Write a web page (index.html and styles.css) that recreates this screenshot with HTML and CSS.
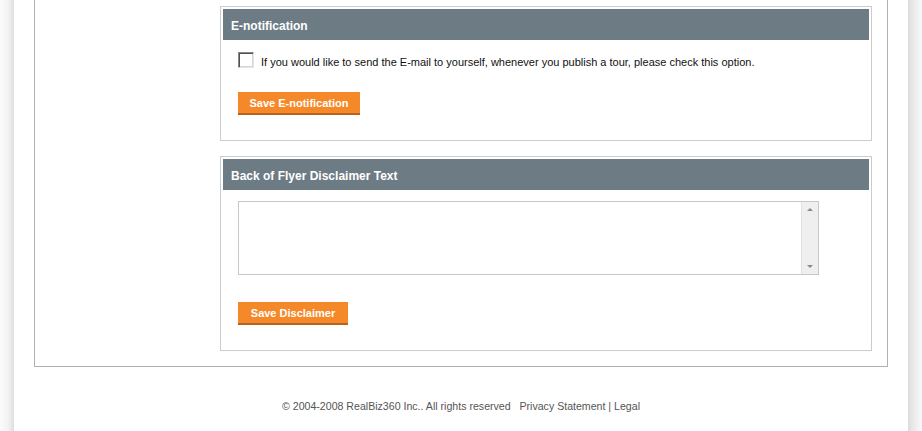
FILE: index.html
```html
<!DOCTYPE html>
<html>
<head>
<meta charset="utf-8">
<link rel="stylesheet" href="styles.css">
</head>
<body>
<div class="page">
  <div class="outer">
    <div class="sidebar"></div>
    <div class="main">
      <div class="panel">
        <div class="panel-head">E-notification</div>
        <div class="panel-body enotify">
          <label class="check-row">
            <input type="checkbox" class="cb">
            <span class="check-text">If you would like to send the E-mail to yourself, whenever you publish a tour, please check this option.</span>
          </label>
          <button class="btn btn-enotify">Save E-notification</button>
        </div>
      </div>
      <div class="panel">
        <div class="panel-head">Back of Flyer Disclaimer Text</div>
        <div class="panel-body disclaimer">
          <div class="ta-wrap">
            <textarea class="ta"></textarea>
            <div class="scroll">
              <span class="arrow up"></span>
              <span class="arrow down"></span>
            </div>
          </div>
          <button class="btn btn-disc">Save Disclaimer</button>
        </div>
      </div>
    </div>
  </div>
  <div class="footer">© 2004-2008 RealBiz360 Inc.. All rights reserved &nbsp; Privacy Statement | Legal</div>
</div>
</body>
</html>
```
FILE: styles.css
```css
html, body {
  margin: 0;
  padding: 0;
  height: 100%;
}
body {
  font-family: "Liberation Sans", Arial, sans-serif;
  background:
    linear-gradient(to right, #fbfbfb 0px, #f3f3f3 8px, #e6e6e6 12px, #dedede 14px, transparent 14px),
    linear-gradient(to left, #f9f9f9 0px, #efefef 6px, #e2e2e2 12px, #dcdcdc 14px, transparent 14px),
    #ffffff;
  min-height: 431px;
}
.page {
  margin: 0 14px;
  background: #ffffff;
  min-height: 431px;
  padding: 0 20px;
}
.outer {
  display: flex;
  border: 1px solid #b0b0b0;
  border-top: none;
}
.sidebar {
  width: 185px;
  flex: none;
}
.main {
  flex: 1;
  padding: 6px 15px 15px 0;
  display: flex;
  flex-direction: column;
  gap: 15px;
}
.panel {
  border: 1px solid #cccccc;
  padding: 2px;
}
.panel-head {
  background: #6d7b85;
  color: #ffffff;
  font-weight: bold;
  font-size: 12px;
  height: 28px;
  line-height: 28px;
  padding-top: 3px;
  padding-left: 8px;
}
.panel-body {
  padding: 0 15px;
}
.enotify {
  padding-top: 12px;
  padding-bottom: 23px;
}
.check-row {
  display: flex;
  align-items: center;
  gap: 7px;
  font-size: 11px;
  color: #111;
  height: 16px;
}
.check-text {
  padding-top: 4px;
}
.cb {
  appearance: none;
  -webkit-appearance: none;
  margin: 0;
  width: 16px;
  height: 16px;
  flex: none;
  background: #ffffff;
  border: 1px solid;
  border-color: #8a8a8a #e4e4e4 #e4e4e4 #8a8a8a;
  box-shadow: inset 1px 1px 0 #505050, inset -1px -1px 0 #d6d6d6;
}
.btn {
  display: block;
  font-family: "Liberation Sans", Arial, sans-serif;
  font-size: 11px;
  font-weight: bold;
  color: #ffffff;
  background: #f5892a;
  border: none;
  border-bottom: 2px solid #b8621e;
  height: 23px;
  padding: 0;
  margin: 0;
  white-space: nowrap;
  text-align: center;
}
.btn-enotify {
  margin-top: 24px;
  width: 122px;
}
.btn-disc {
  margin-top: 27px;
  width: 110px;
}
.disclaimer {
  padding-top: 11px;
  padding-bottom: 23px;
}
.ta-wrap {
  display: flex;
  width: 579px;
  height: 72px;
  border: 1px solid #c8c8c8;
}
.ta {
  flex: 1;
  border: none;
  resize: none;
  outline: none;
  margin: 0;
  padding: 2px;
  font-family: "Liberation Sans", Arial, sans-serif;
}
.scroll {
  width: 16px;
  flex: none;
  background: #efefef;
  border-left: 1px solid #e0e0e0;
  display: flex;
  flex-direction: column;
  justify-content: space-between;
  align-items: center;
  padding: 6px 0 6px;
}
.arrow {
  width: 0;
  height: 0;
  border-left: 3px solid transparent;
  border-right: 3px solid transparent;
}
.arrow.up {
  border-bottom: 3px solid #8a8a8a;
}
.arrow.down {
  border-top: 3px solid #8a8a8a;
}
.footer {
  text-align: center;
  font-size: 10.6px;
  color: #555555;
  margin-top: 32px;
  line-height: 14px;
  margin-left: -34px;
  margin-right: -34px;
}
```
